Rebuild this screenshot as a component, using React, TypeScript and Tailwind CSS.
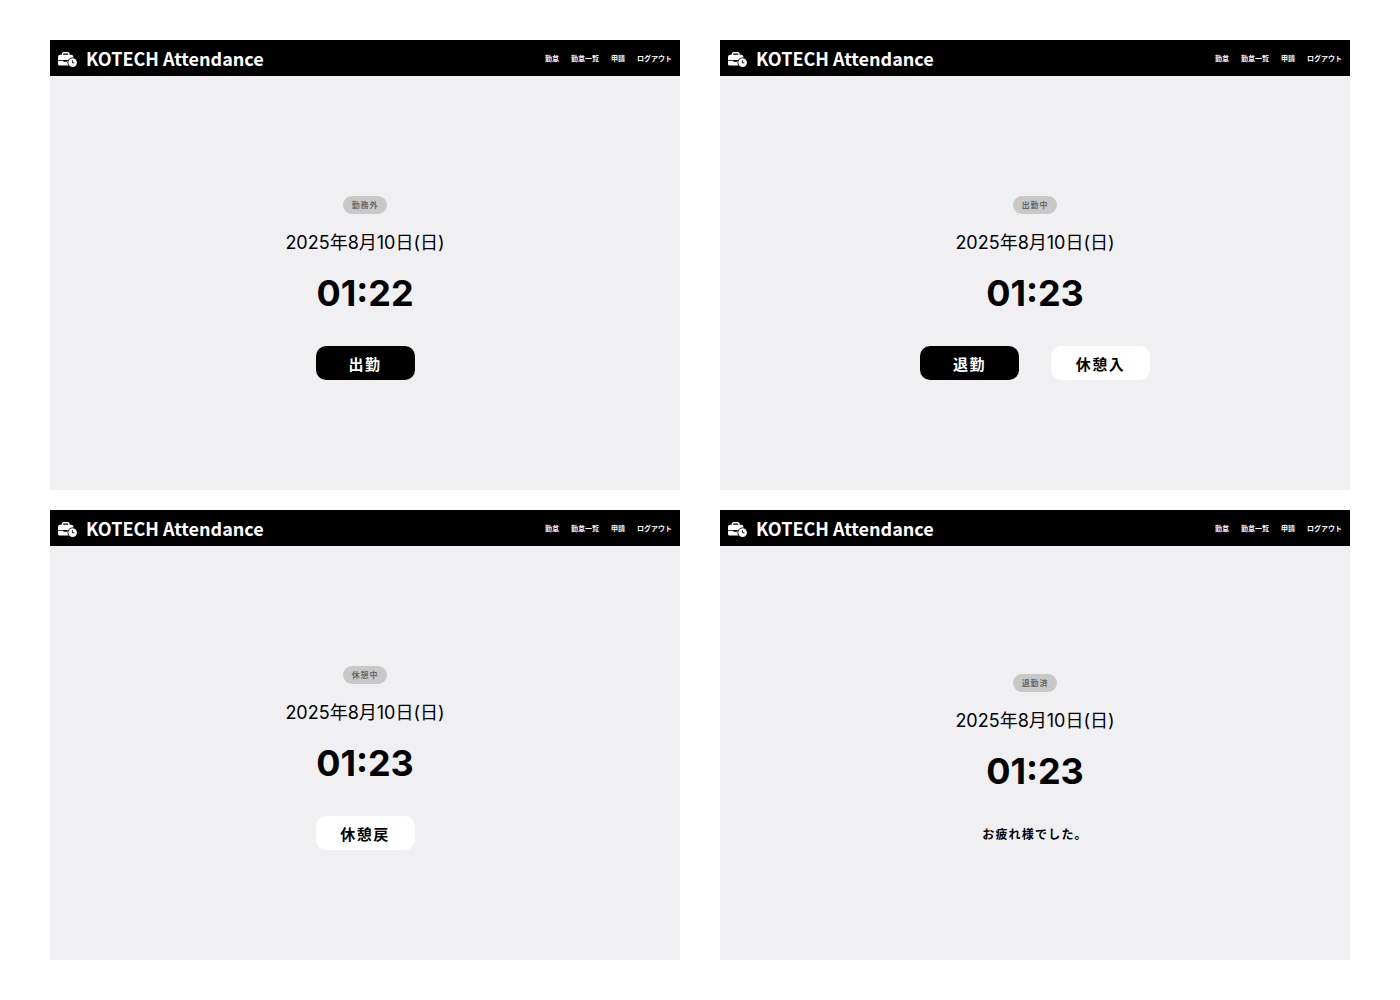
import React from "react";

type Action = { label: string; primary?: boolean };

type Screen = {
  id: string;
  status: string;
  time: string;
  actions: Action[];
  message?: string;
};

const screens: Screen[] = [
  { id: "off", status: "勤務外", time: "01:22", actions: [{ label: "出勤", primary: true }] },
  {
    id: "working",
    status: "出勤中",
    time: "01:23",
    actions: [{ label: "退勤", primary: true }, { label: "休憩入" }],
  },
  { id: "break", status: "休憩中", time: "01:23", actions: [{ label: "休憩戻" }] },
  { id: "done", status: "退勤済", time: "01:23", actions: [], message: "お疲れ様でした。" },
];

const navItems = ["勤怠", "勤怠一覧", "申請", "ログアウト"];

function BriefcaseClock() {
  return (
    <svg viewBox="0 0 19 15" className="mt-[3px] h-[15px] w-[19px]" aria-hidden="true">
      <path
        d="M4.4 3.2V2.2Q4.4.8 5.8.8H9.6Q11 .8 11 2.2V3.2"
        fill="none"
        stroke="white"
        strokeWidth="1.4"
      />
      <path d="M2.2 2.8H13.2Q15.2 2.8 15.4 4.8V8H0V4.8Q.2 2.8 2.2 2.8Z" fill="white" />
      <path d="M0 8.8H5.4V9.8H9.4V8.8H15.4V13.6H1.6Q0 13.6 0 12Z" fill="white" />
      <circle cx="14.6" cy="10.6" r="5.1" fill="black" />
      <circle cx="14.6" cy="10.6" r="4.3" fill="white" />
      <path d="M14.4 8.2V10.8H16.4" fill="none" stroke="black" strokeWidth="0.9" />
    </svg>
  );
}

function Header() {
  return (
    <header className="flex h-9 items-center justify-between bg-black px-2 text-white">
      <a href="#" className="flex items-center gap-[9px]">
        <BriefcaseClock />
        <span className="text-lg leading-6 font-bold">KOTECH Attendance</span>
      </a>
      <nav className="flex gap-3 text-[7px] leading-4 font-bold">
        {navItems.map((item) => (
          <a key={item} href="#">
            {item}
          </a>
        ))}
      </nav>
    </header>
  );
}

function ActionButton({ label, primary }: Action) {
  return (
    <button
      type="button"
      className={`h-[34px] w-[99px] rounded-[10px] pt-0.5 text-[15px] font-bold tracking-widest ${
        primary ? "bg-black text-white" : "bg-white text-black"
      }`}
    >
      {label}
    </button>
  );
}

function AttendanceScreen({ screen }: { screen: Screen }) {
  return (
    <section className="flex min-h-[450px] flex-col bg-[#f0eff2]">
      <Header />
      <main className="flex grow flex-col items-center justify-center pt-2.5">
        <span className="rounded-full bg-[#c8c8c8] px-[9px] text-[8px] leading-[18px] font-bold tracking-widest text-[#696969]">
          {screen.status}
        </span>
        <p className="mt-4 font-['Inter','Noto_Sans_CJK_JP',sans-serif] text-lg leading-[26px]">
          2025年8月10日(日)
        </p>
        <p className="mt-4 font-['Inter',sans-serif] text-4xl leading-[42px] font-bold">
          {screen.time}
        </p>
        {screen.message ? (
          <p className="mt-8 pt-0.5 text-xs font-bold tracking-widest">{screen.message}</p>
        ) : (
          <div className="mt-8 flex gap-8">
            {screen.actions.map((action) => (
              <ActionButton key={action.label} {...action} />
            ))}
          </div>
        )}
      </main>
    </section>
  );
}

export default function App() {
  return (
    <div
      lang="ja"
      className="grid min-h-screen grid-cols-2 content-start gap-x-10 gap-y-5 bg-white px-[50px] py-10 font-['Noto_Sans_CJK_JP',sans-serif] text-black"
    >
      {screens.map((screen) => (
        <AttendanceScreen key={screen.id} screen={screen} />
      ))}
    </div>
  );
}
